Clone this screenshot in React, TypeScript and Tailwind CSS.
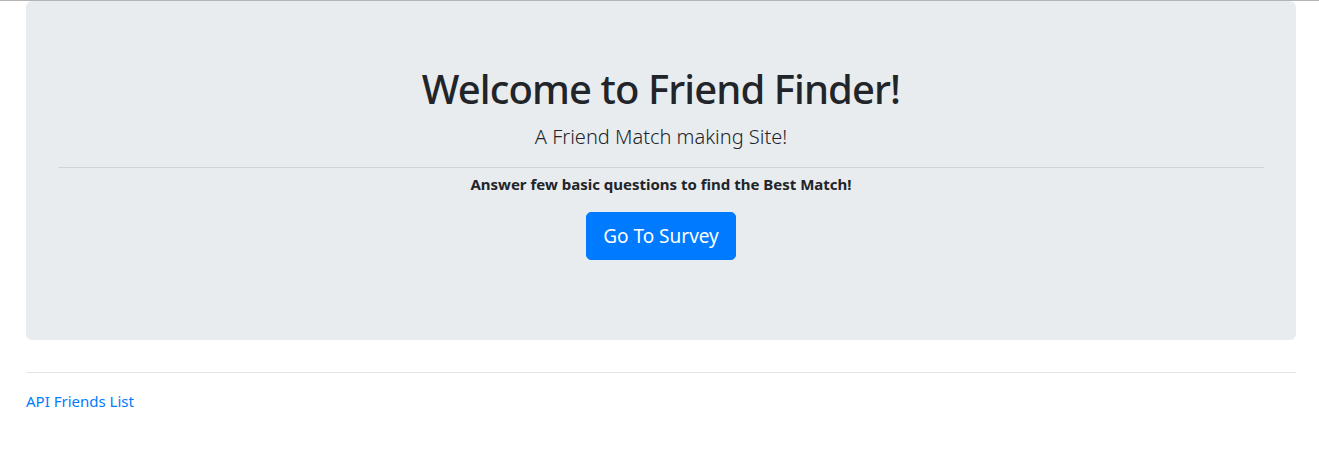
export default function App() {
  const font = { fontFamily: '"Noto Sans", "Open Sans", sans-serif' };
  return (
    <div className="min-h-[471px] bg-white border-t border-[#b4b4b4] text-[#212529]" style={font}>
      <div className="mx-[26px] w-[1270px]">
        <div className="bg-[#e9ecef] rounded-[6px] px-8 pt-16 pb-[80px] mb-8 text-center">
          <h1 className="text-[40px] leading-[48px] font-medium mb-[9px] tracking-[-0.9px]">Welcome to Friend Finder!</h1>
          <p className="text-[20px] leading-[30px] font-light">A Friend Match making Site!</p>
          <hr className="mt-[15px] mb-1 border-0 border-t border-[rgba(0,0,0,0.1)]" />
          <p className="text-[15px] leading-[24px] font-bold mb-4">Answer few basic questions to find the Best Match!</p>
          <div>
            <a href="#" className="inline-block bg-[#007bff] text-white text-[19px] leading-[30px] px-4 py-2 rounded-[5px] border border-[#007bff]">Go To Survey</a>
          </div>
        </div>
        <hr className="border-0 border-t border-[rgba(0,0,0,0.1)] mb-4" />
        <a href="#" className="text-[#007bff] text-[15px] leading-[24px]">API Friends List</a>
      </div>
    </div>
  );
}
